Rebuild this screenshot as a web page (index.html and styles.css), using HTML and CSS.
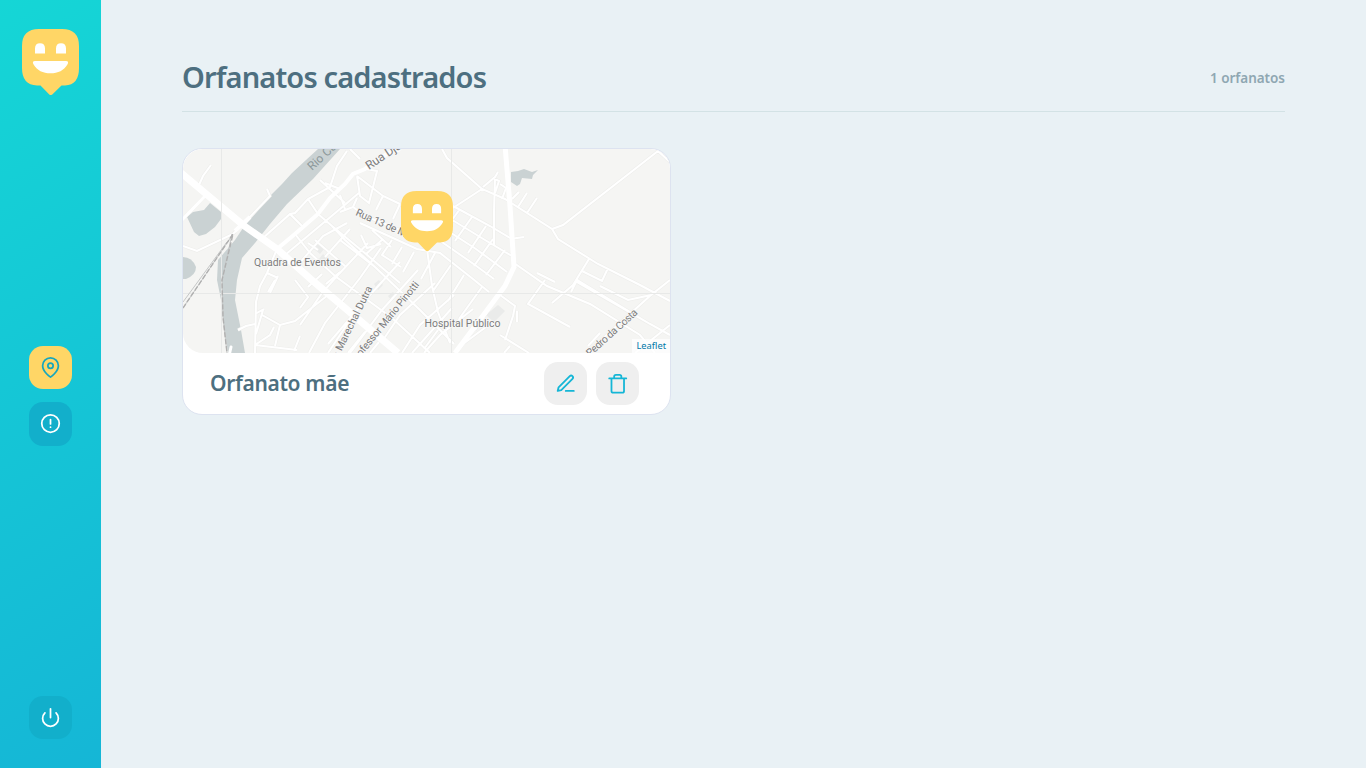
FILE: index.html
```html
<!DOCTYPE html>
<html lang="pt-BR">
<head>
<meta charset="utf-8">
<title>Orfanatos cadastrados</title>
<link rel="stylesheet" href="styles.css">
</head>
<body>
<div class="page">
  <aside class="sidebar">
    <svg class="logo" viewBox="0 0 57 66">
      <g id="happy">
        <path fill="#ffd666" d="M17 0h23q17 0 17 17v22q0 17-14 17.500h-3.500l-9.200 9.100q-1.800 1-3 0L18.500 56.500H15Q0 56 0 39V17Q0 0 17 0z"/>
        <path fill="#fff" d="M13 24.500v-5q0-5.300 5-5.300t5 5.300v5zM34 24.500v-5q0-5.300 5-5.300t5 5.300v5zM13 32h31q3 .2 1.700 2.900C42 41.500 36 44.200 28.500 44.200S15 41.500 11.300 34.900Q10 32.200 13 32z"/>
      </g>
    </svg>
    <nav class="nav">
      <a class="side-button active"><svg class="icon" viewBox="0 0 24 24"><path d="M21 10c0 7-9 13-9 13s-9-6-9-13a9 9 0 0 1 18 0z"/><circle cx="12" cy="10" r="3"/></svg></a>
      <a class="side-button"><svg class="icon" viewBox="0 0 24 24"><circle cx="12" cy="12" r="10"/><path d="M12 7.500v5M12 16v.2"/></svg></a>
    </nav>
    <a class="side-button"><svg class="icon" viewBox="0 0 24 24"><path d="M18.360 6.640a9 9 0 1 1-12.730 0M12 2v10"/></svg></a>
  </aside>
  <main class="content">
    <header class="header">
      <h1 class="title">Orfanatos cadastrados</h1>
      <span class="count">1 orfanatos</span>
    </header>
    <article class="card">
      <div class="map">
        <svg class="map-art" viewBox="183 149 487 204">
          <g class="water">
            <path d="M318 149 306 160 292 173 282 184 268 198 255 214 243 228 235 240 218 260 217 280 221 300 224 326 228 353H245L241 330 235 300 237 280 242 258 255 243 270 224 287 204 313 179 340 149z"/>
            <path d="M187 217 193 212 204 210 210 203 221 212 221 219 215 227 206 234 199 236 194 232z"/>
            <path d="M183 257Q192 257 196 267 196 275 186 279H183z"/>
            <path d="M511 172 518 171 524 169 532 172 538 170 533 175 532 179 522 178 520 184 517 186 511 182z"/>
          </g>
          <g class="blocks"><path d="M317 243l7 6-4 5-7-6zM323 254l7 6-4 5-7-6zM486 315l12-10 7 6-11 11zM374 284l5-4 4 5-5 5zM388 296l5-4 3 4-4 5z"/></g>
          <defs>
            <path id="streets" d="M183 219 205 196M199 185 203 176 211 165M183 246 197 251 233 234 248 219 270 196 267 189M263 238 290 214 295 213 308 199 330 187 337 166 347 151M290 214 302 226M308 199 318 214M325 183 340 189M295 234 310 253M318 214 332 226 345 240M277 249 267 273 260 286 256 302 255 353M285 255 340 209 360 192M298 265 323 236 347 223M267 273 278 278M278 276 270 293M310 253 335 276 392 318 430 353M345 240 375 267 420 310 454 344M332 226 366 254 400 283M350 229 325 257M368 243 338 275 322 293 300 325M381 248 360 278 325 323 309 353M400 262 370 295 328 344M418 270 382 310 350 353M435 283 400 315 383 340M454 295 420 325 402 353M473 309 440 335 424 353M490 324 463 344 456 353M357 176 383 196 400 204M365 169 377 171 369 203 360 196 357 176M383 196 376 210M400 204 393 219M340 212 353 207 365 216 420 238M345 209 340 195M353 207 357 198M360 223 417 249 440 253 473 279 489 292M340 240 375 267M366 254 383 239M361 235 367 248 381 244M372 230 391 247M427 249 432 286 438 312 450 343M442 149 447 158 482 189 505 199 552 229 558 239 598 264 640 285 670 301M482 189 453 208M453 206 490 226 510 238M449 218 485 240 512 256M445 229 476 249 507 272M439 240 475 265 494 279M483 187 495 177 498 172M495 193 499 181 495 179 494 211 494 245M460 209 446 228M472 217 455 241M486 226 468 253M493 239 474 266M505 250 486 275M502 199 506 188 500 184M512 199 519 192M518 207 527 193M527 213 537 198M552 229 563 225 658 151 670 162M510 239 524 237M589 259 573 285 552 303M582 271 602 281 608 268M575 281 650 324M514 263 547 286 590 304 640 335 655 353M537 273 555 282M600 286 628 300 651 295 670 280M545 280 528 304 570 327M571 292 577 280 650 324 670 335M651 295 610 332 588 353M670 325 635 353M600 333 588 346M500 295 515 306 513 316 505 340M517 311 517 322M500 335 529 353M510 346 504 353M295 280 308 297 300 308M255 314 264 309M263 310 256 334M262 315 280 325 295 321 328 295M280 325 275 346M255 345 270 335 274 327M255 345 297 350M300 336 294 351M238 330 246 326 255 324M268 292 275 280M308 287 322 274M326 284 340 272M350 149 360 159M350 320 328 353M365 332 348 353M379 342 370 353M412 353 452 308M424 349 438 330M345 203 320 180M315 240 345 266M308 243 318 250M392 240 382 255 401 267M402 247 392 264M414 252 403 272M435 253 421 279M451 265 433 291M464 275 448 301M482 287 459 319M495 300 475 330"/>
            <path id="avenues" d="M277 249 295 234 318 214 330 198 345 184 353 174 365 169 388 153 400 149M235 231 250 217"/>
          </defs>
          <use href="#streets" class="casing"/>
          <use href="#streets" class="street"/>
          <use href="#avenues" class="avenue"/>
          <g class="highway">
            <path d="M180 172 243 225 277 249 313 281 345 308 398 353"/>
            <path class="highway-east" d="M505 145 510 206 514 267 505 286 485 313 455 353"/>
            <path class="ramp" d="M231 347 229 356M183 219 205 196"/>
          </g>
          <path class="tile" d="M221.500 149V353M451.500 149V353M183 293.500H670"/>
          <g class="rail"><path d="M183 308 233 234M183 302 227 242M232 234 222 280 223 317 227 353"/><path class="rail-dash" d="M183 308 233 234 222 280 223 317 227 353"/></g>
          <g class="labels">
            <text x="254" y="265.500" textLength="87">Quadra de Eventos</text>
            <text x="424.500" y="327" textLength="76">Hospital Público</text>
            <text transform="translate(312 171) rotate(-43)" class="river">Rio Cu</text>
            <text transform="translate(369 170) rotate(-34)" class="major" textLength="43">Rua Djal</text>
            <text transform="translate(355 215) rotate(24)" textLength="68">Rua 13 de Maio</text>
            <text transform="translate(338 359) rotate(-64)" textLength="79">a Marechal Dutra</text>
            <text transform="translate(361 357) rotate(-51)" textLength="93">ofessor Mário Pinotti</text>
            <text transform="translate(590 357) rotate(-42)" textLength="65">Pedro da Costa</text>
          </g>
          <g transform="translate(401 191) scale(.912)"><use href="#happy"/></g>
        </svg>
        <a class="attribution">Leaflet</a>
      </div>
      <footer class="card-footer">
        <h2 class="name">Orfanato mãe</h2>
        <div class="actions">
          <button class="action"><svg class="action-icon" viewBox="0 0 24 24"><path d="M12 20h9M16.500 3.500a2.120 2.120 0 0 1 3 3L7 19l-4 1 1-4z"/></svg></button>
          <button class="action"><svg class="action-icon" viewBox="0 0 24 24"><path d="M2.500 6h19M19 6v14a2 2 0 0 1-2 2H7a2 2 0 0 1-2-2V6M8 6V4a2 2 0 0 1 2-2h4a2 2 0 0 1 2 2v2"/></svg></button>
        </div>
      </footer>
    </article>
  </main>
</div>
</body>
</html>
```
FILE: styles.css
```css
* { box-sizing: border-box; margin: 0; padding: 0; }
body { background: #e9f1f5; font-family: "Noto Sans", "Open Sans", sans-serif; color: #4d6f80; }
.page { display: flex; height: 768px; }
.sidebar { width: 101px; padding: 29px 0; display: flex; flex-direction: column; align-items: center; justify-content: space-between; background: linear-gradient(329.54deg, #15b6d6 0%, #15d6d6 100%); }
.logo { width: 57px; height: 66px; }
.nav { display: flex; flex-direction: column; gap: 13px; }
.side-button { width: 43px; height: 43px; border-radius: 14px; background: #12afcb; color: #fff; display: flex; align-items: center; justify-content: center; }
.nav .side-button + .side-button { height: 44px; }
.side-button.active { background: #ffd666; color: #17a6bd; }
.icon { width: 21px; height: 21px; }
.icon, .action-icon { fill: none; stroke: currentColor; stroke-width: 2; stroke-linecap: round; stroke-linejoin: round; }
.content { flex: 1; padding: 44px 81px 0; }
.header { height: 68px; display: flex; align-items: center; justify-content: space-between; border-bottom: 1px solid #d3e2e5; margin-bottom: 36px; }
.title { font-size: 29px; font-weight: 600; line-height: 40px; letter-spacing: -.86px; padding-bottom: 2px; }
.count { font-size: 13.500px; font-weight: 600; letter-spacing: -.03px; color: #8fa7b2; }
.card { width: 489px; height: 267px; background: #fff; border: 1px solid #dde3f0; border-radius: 20px; overflow: hidden; }
.map { position: relative; height: 204px; background: #f5f5f3; border-radius: 20px 20px 0 20px; overflow: hidden; }
.map-art { display: block; width: 487px; height: 204px; }
.water { fill: #cad2d3; }
.blocks { fill: #eaebea; }
.casing, .street, .avenue, .highway, .tile, .rail { fill: none; }
.casing { stroke: #eeeeec; stroke-width: 3.200; }
.street { stroke: #fff; stroke-width: 2; }
.avenue { stroke: #fff; stroke-width: 4; }
.highway { stroke: #fff; stroke-width: 7; }
.highway-east { stroke-width: 5; }
.ramp { stroke-width: 3; stroke-linecap: round; }
.tile { stroke: #e8e9e8; stroke-width: 1; }
.rail { stroke: #c5c7c7; stroke-width: 1; }
.rail-dash { stroke: #b0b0b0; stroke-width: 1.400; stroke-dasharray: 5 2; }
.labels { font-family: Roboto, sans-serif; font-size: 10.500px; fill: #7d7d7d; stroke: #f8f8f7; stroke-width: 1.500px; paint-order: stroke; }
.labels .river { font-size: 12px; fill: #8c989a; stroke: none; }
.labels .major { font-size: 12px; }
.attribution { position: absolute; right: 0; bottom: 0; height: 14px; padding: 0 4px; background: rgba(255,255,255,.7); color: #0078a8; font-size: 9.300px; line-height: 14px; }
.card-footer { height: 61px; padding: 0 31px 0 27px; display: flex; align-items: center; justify-content: space-between; }
.name { font-size: 21px; font-weight: 600; letter-spacing: -.33px; padding-bottom: 1px; }
.actions { display: flex; gap: 9px; }
.action { width: 43px; height: 43px; border: 0; border-radius: 14px; background: #efefef; color: #15b6d6; display: flex; align-items: center; justify-content: center; }
.action-icon { width: 21.500px; height: 21.500px; }
```
